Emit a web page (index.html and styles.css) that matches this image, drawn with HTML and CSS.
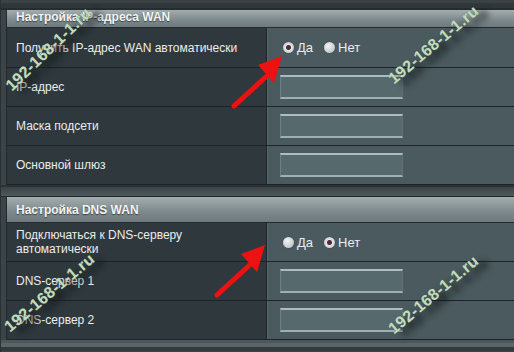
FILE: index.html
```html
<!DOCTYPE html>
<html lang="ru">
<head>
<meta charset="UTF-8">
<title>WAN</title>
<link rel="stylesheet" href="styles.css">
</head>
<body>

<div class="page">
    <div class="top-strip"></div>

    <div class="section">
        <div class="sec-head first">Настройка IP-адреса WAN</div>
        <div class="row tall">
            <div class="label">Получить IP-адрес WAN автоматически</div>
            <div class="field">
                <span class="radio checked"></span><span class="opt">Да</span>
                <span class="radio"></span><span class="opt">Нет</span>
            </div>
        </div>
        <div class="row">
            <div class="label">IP-адрес</div>
            <div class="field"><div class="input"></div></div>
        </div>
        <div class="row">
            <div class="label">Маска подсети</div>
            <div class="field"><div class="input"></div></div>
        </div>
        <div class="row">
            <div class="label">Основной шлюз</div>
            <div class="field"><div class="input"></div></div>
        </div>
    </div>

    <div class="gap"></div>

    <div class="section">
        <div class="sec-head">Настройка DNS WAN</div>
        <div class="row">
            <div class="label">Подключаться к DNS-серверу<br>автоматически</div>
            <div class="field">
                <span class="radio"></span><span class="opt">Да</span>
                <span class="radio checked"></span><span class="opt">Нет</span>
            </div>
        </div>
        <div class="row">
            <div class="label">DNS-сервер 1</div>
            <div class="field"><div class="input"></div></div>
        </div>
        <div class="row">
            <div class="label">DNS-сервер 2</div>
            <div class="field"><div class="input"></div></div>
        </div>
    </div>

    <div class="bottom-strip"></div>

    <!-- watermarks -->
    <div class="mark m1">192-168-1-1.ru</div>
    <div class="mark m2">192-168-1-1.ru</div>
    <div class="mark m3">192-168-1-1.ru</div>
    <div class="mark m4">192-168-1-1.ru</div>

    <!-- red arrows -->
    <svg class="arrow a1" width="70" height="60" viewBox="0 0 70 60">
        <line x1="4" y1="55" x2="40" y2="22" stroke="#ee1111" stroke-width="5" stroke-linecap="round"/>
        <polygon points="52,5 28,14 44,32" fill="#ee1111"/>
    </svg>
    <svg class="arrow a2" width="70" height="60" viewBox="0 0 70 60">
        <line x1="4" y1="55" x2="40" y2="22" stroke="#ee1111" stroke-width="5" stroke-linecap="round"/>
        <polygon points="52,5 28,14 44,32" fill="#ee1111"/>
    </svg>
</div>

</body>
</html>
```

FILE: styles.css
```css
body {
    margin: 0;
    background-color: #3c4447;
    font-family: "Liberation Sans", Arial, sans-serif;
    font-size: 12px;
    color: #ececec;
}
.page {
    position: relative;
    width: 514px;
    height: 352px;
    overflow: hidden;
    padding-left: 5px;
    box-sizing: border-box;
    border-left: 1px solid #2a3134;
    background-color: #3c4447;
}
.top-strip {
    height: 10px;
    margin-left: -5px;
    box-sizing: border-box;
    border-top: 3px solid #3a4245;
    border-bottom: 2px solid #262d30;
    background-color: #2f373a;
}
.section {
    border-left: 1px solid #22292c;
}
.sec-head {
    height: 25px;
    line-height: 27px;
    padding-left: 9px;
    font-weight: bold;
    color: #f4f4f4;
    text-shadow: 0 1px 1px #3a4447;
    background-image: linear-gradient(#a3adb0, #7c888b 60%, #6e7a7d);
    border-bottom: 1px solid #242b2e;
}
.sec-head.first {
    height: 17px;
    line-height: 15px;
}
.row {
    display: flex;
    height: 39px;
    box-sizing: border-box;
    border-bottom: 1px solid #1d2427;
}
.row.tall {
    height: 40px;
}
.label {
    width: 250px;
    padding-left: 9px;
    display: flex;
    align-items: center;
    line-height: 14px;
    background-color: #2f393d;
    border-right: 1px solid #1f2629;
}
.field {
    flex: 1;
    display: flex;
    align-items: center;
    padding-left: 15px;
    background-color: #4a5a5e;
    border-left: 1px solid #56676b;
}
.radio {
    width: 11px;
    height: 11px;
    border-radius: 50%;
    background-image: radial-gradient(circle at 40% 35%, #f4f4f4, #c4c9cb 70%, #9aa2a5);
    box-shadow: 0 0 1px #2a3235;
}
.radio.checked {
    background-image: radial-gradient(circle, #4a2c36 0, #4a2c36 2px, #e6e6e6 3px, #c4c9cb 75%, #9aa2a5);
}
.opt {
    margin-left: 3px;
    margin-right: 11px;
    font-size: 13px;
}
.input {
    width: 123px;
    height: 24px;
    margin-left: -3px;
    box-sizing: border-box;
    background-color: #56696d;
    border-top: 2px solid #aebcbf;
    border-bottom: 2px solid #9fb0b3;
    border-left: 1px solid #6d8084;
    border-right: 1px solid #5e7175;
}
.gap {
    height: 12px;
    margin-left: -5px;
    box-sizing: border-box;
    border-top: 2px solid #2a3235;
    border-bottom: 1px solid #22292c;
    background-image: linear-gradient(#3a4346, #4f585b);
}
.bottom-strip {
    height: 11px;
    box-sizing: border-box;
    border-top: 3px solid #4d575a;
    border-bottom: 4px solid #323a3d;
    background-color: #5b6569;
    margin-left: -5px;
}
.mark {
    position: absolute;
    font-size: 16px;
    line-height: 16px;
    font-weight: bold;
    letter-spacing: 0.3px;
    color: #c2dbbd;
    text-shadow: 6px 8px 6px rgba(18, 24, 26, 0.95), 0 0 1px #5d7a5a;
    transform: rotate(-40deg);
    transform-origin: left bottom;
    white-space: nowrap;
}
.m1 { left: 13px; top: 78px; transform: rotate(-44deg); }
.m2 { left: 395px; top: 71px; }
.m3 { left: 11px; top: 319px; }
.m4 { left: 395px; top: 321px; }
.arrow {
    position: absolute;
}
.a1 { left: 229px; top: 51px; }
.a2 { left: 212px; top: 240px; }
```
